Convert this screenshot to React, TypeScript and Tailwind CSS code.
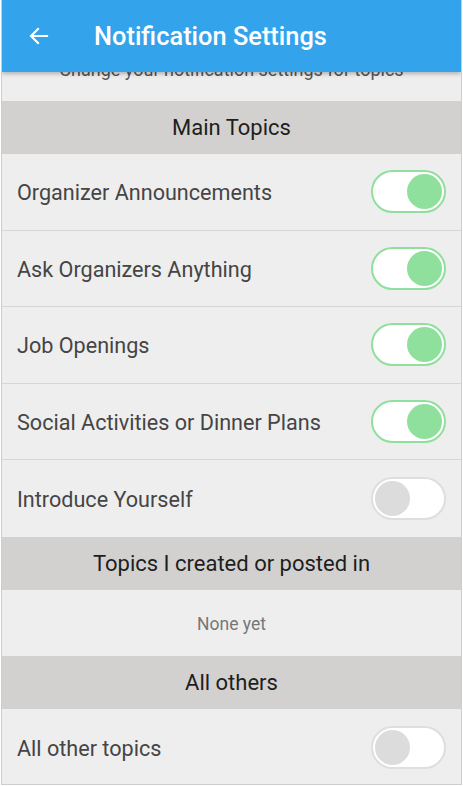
import React, { useState } from 'react';

type Topic = { id: string; label: string; on: boolean };

const mainTopics: Topic[] = [
  { id: 'org', label: 'Organizer Announcements', on: true },
  { id: 'ask', label: 'Ask Organizers Anything', on: true },
  { id: 'jobs', label: 'Job Openings', on: true },
  { id: 'social', label: 'Social Activities or Dinner Plans', on: true },
  { id: 'intro', label: 'Introduce Yourself', on: false },
];

const Toggle = ({ on, onChange }: { on: boolean; onChange: () => void }) => (
  <button
    onClick={onChange}
    className={`w-[75px] h-[43px] rounded-full border-2 bg-white flex items-center px-[2px] ${
      on ? 'border-[#8fe09d] justify-end' : 'border-[#dedede] justify-start'
    }`}
  >
    <span className={`block w-[35px] h-[35px] rounded-full ${on ? 'bg-[#8fe09d]' : 'bg-[#dcdcdc]'}`} />
  </button>
);

const SectionHeader = ({ title }: { title: string }) => (
  <div className="h-[53px] bg-[#d3d1cf] flex items-center justify-center text-[22px] text-[#1e1e1e]">
    {title}
  </div>
);

const Row = ({ label, on, onToggle }: { label: string; on: boolean; onToggle: () => void }) => (
  <div className="h-[76.6px] flex items-center justify-between pl-[15px] pr-[15px] border-b border-[#d6d6d6] last:border-b-0">
    <span className="text-[21.6px] text-[#454545] pt-[3px]">{label}</span>
    <Toggle on={on} onChange={onToggle} />
  </div>
);

export default function App() {
  const [topics, setTopics] = useState(mainTopics);
  const [allOthers, setAllOthers] = useState(false);

  const toggle = (id: string) =>
    setTopics(t => t.map(x => (x.id === id ? { ...x, on: !x.on } : x)));

  return (
    <div className="w-[463px] h-[786px] bg-white" style={{ fontFamily: 'Roboto, "Noto Sans", sans-serif' }}>
      <div className="relative ml-[1px] w-[461px] h-[785px] overflow-hidden bg-[#eeeeee] border-x border-b border-[#cdcdcd]">
        {/* app bar */}
        <div className="absolute top-0 left-0 right-0 z-10 h-[72px] bg-[#33a3ec] flex items-center shadow-[0_2px_4px_rgba(0,0,0,0.25)]">
          <svg width="24" height="24" viewBox="0 0 24 24" className="ml-[25px]" fill="none" stroke="white" strokeWidth="2.2" strokeLinecap="square">
            <path d="M20 12H5M11 5l-7 7 7 7" />
          </svg>
          <span className="ml-[43px] text-[25.4px] font-medium text-white">Notification Settings</span>
        </div>

        <div className="pt-[50px]">
          <div className="h-[51px] flex items-center justify-center text-[18px] text-[#555] pb-[12px]">
            Change your notification settings for topics
          </div>

          <SectionHeader title="Main Topics" />
          <div>
            {topics.map(t => (
              <Row key={t.id} label={t.label} on={t.on} onToggle={() => toggle(t.id)} />
            ))}
          </div>

          <SectionHeader title="Topics I created or posted in" />
          <div className="h-[66px] flex items-center justify-center text-[17.5px] text-[#777] pt-[2px]">None yet</div>

          <SectionHeader title="All others" />
          <Row label="All other topics" on={allOthers} onToggle={() => setAllOthers(v => !v)} />
        </div>
      </div>
    </div>
  );
}
